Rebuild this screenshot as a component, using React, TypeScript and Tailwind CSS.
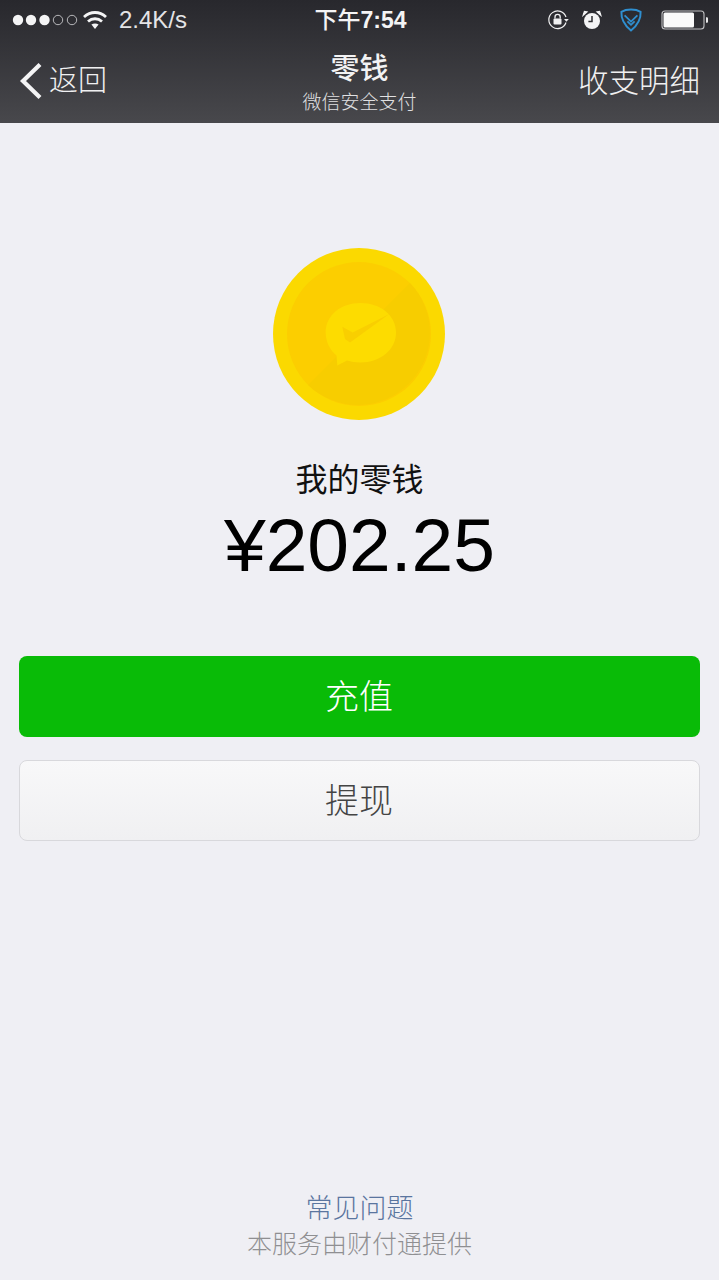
import React from "react";

const cjk = { fontFamily: '"Liberation Sans","Noto Sans CJK SC",sans-serif' };

function Signal() {
  return (
    <svg width="66" height="14" viewBox="0 0 66 14" className="block">
      {[6, 19, 32.5].map((x) => <circle key={x} cx={x} cy="7" r="5.2" fill="#f4f4f5" />)}
      {[46, 60].map((x) => <circle key={x} cx={x} cy="7" r="4.7" fill="none" stroke="#d8d8da" strokeWidth="0.8" />)}
    </svg>
  );
}

function Wifi() {
  return (
    <svg width="24" height="20" viewBox="0 0 24 20" className="block">
      <path d="M1 7C7.400 1 16.600 1 23 7" fill="none" stroke="#f4f4f5" strokeWidth="2.800" />
      <path d="M5 11.500C9.200 7.800 14.800 7.800 19 11.500" fill="none" stroke="#f4f4f5" strokeWidth="2.800" />
      <path d="M8.400 14.600C10.600 13 13.400 13 15.600 14.600L12 19Z" fill="#f4f4f5" />
    </svg>
  );
}

function RotationLock() {
  return (
    <svg width="22" height="22" viewBox="0 0 22 22" className="block">
      <path d="M19 13.500A8.800 8.800 0 1 1 19 8" fill="none" stroke="#f0f0f1" strokeWidth="1.200" />
      <path d="M17 10h4.800L19.400 12.800Z" fill="#f0f0f1" />
      <rect x="6.500" y="9.500" width="8" height="6" rx="1" fill="#f0f0f1" />
      <path d="M8 9.500V8a2.600 2.600 0 0 1 5.200 0v1.500" fill="none" stroke="#f0f0f1" strokeWidth="1.300" />
    </svg>
  );
}

function Alarm() {
  return (
    <svg width="20" height="20" viewBox="0 0 20 20" className="block">
      <circle cx="10" cy="11" r="8" fill="#f4f4f5" />
      <path d="M1.200 5.200 5 1.800 2.400 1.400Z M18.800 5.200 15 1.800 17.600 1.400Z" fill="#f4f4f5" stroke="#f4f4f5" strokeWidth="1.200" />
      <path d="M10 6v5.400H6.400" fill="none" stroke="#2d2d31" strokeWidth="1.500" />
    </svg>
  );
}

function Shield() {
  return (
    <svg width="22" height="24" viewBox="0 0 22 24" className="block">
      <path d="M11 1.500C14.500 1.500 18 2.200 20.600 3.800C21 9.500 18 17 11 22.500C4 17 1 9.500 1.400 3.800C4 2.200 7.500 1.500 11 1.500Z" fill="none" stroke="#2f8fd0" strokeWidth="2" />
      <path d="M4.600 7.400 11 13.600 17.400 7.400M7.400 13.400 11 16.800 14.600 13.400" fill="none" stroke="#2f8fd0" strokeWidth="1.800" />
    </svg>
  );
}

function Battery() {
  return (
    <svg width="48" height="20" viewBox="0 0 48 20" className="block">
      <rect x="1" y="1" width="42" height="18" rx="3" fill="none" stroke="#c0c0c2" strokeWidth="1.100" />
      <rect x="2.500" y="2.500" width="30.500" height="15" rx="1.500" fill="#fafafa" />
      <path d="M45 7.200h.8c.8 0 1.200.6 1.200 1.400v2.800c0 .8-.4 1.400-1.200 1.400H45Z" fill="#e8e8e9" />
    </svg>
  );
}

function Coin() {
  return (
    <svg width="172" height="172" viewBox="0 0 172 172" className="block">
      <circle cx="86" cy="86" r="86" fill="#fbd900" />
      <circle cx="86" cy="86" r="72" fill="#fcce00" />
      <path d="M136.900 35.100A72 72 0 0 1 35.100 136.900Z" fill="#f7cd00" />
      <path d="M87.500 55C107 55 123 67 123 84.500C123 102 107 114.500 87.500 114.500C82.500 114.500 78 113.800 74 112.500L64.300 117.500L63.500 107.500C57 102 52.700 94 52.700 84.500C52.700 67 68 55 87.500 55Z" fill="#fddc00" />
      <path d="M69.300 78.700L79.700 84.500L116.300 66L77 94.500L72 91Z" fill="#f9cf00" />
    </svg>
  );
}

export default function App() {
  return (
    <div className="w-[719px] h-[1280px] flex flex-col bg-[#efeff4] overflow-hidden" style={cjk}>
      <header className="h-[123px] shrink-0 bg-gradient-to-b from-[#28282d] to-[#48484c] text-white">
        <div className="h-[40px] pl-[12px] pr-[10px] grid grid-cols-[1fr_auto_1fr] items-center">
          <div className="flex items-center gap-[5px]">
            <Signal />
            <Wifi />
            <span className="ml-[7px] text-[24px] leading-[24px] text-[#e4e4e6]">2.4K/s</span>
          </div>
          <div className="text-center text-[23px] leading-[24px] font-medium text-[#f4f4f5]">下午<span className="font-semibold">7:54</span></div>
          <div className="flex items-center justify-end">
            <RotationLock />
            <div className="ml-[13px]"><Alarm /></div>
            <div className="ml-[18px]"><Shield /></div>
            <div className="ml-[19px]"><Battery /></div>
          </div>
        </div>
        <div className="h-[83px] grid grid-cols-[1fr_auto_1fr] items-start pl-[19px] pr-[19px]">
          <div className="flex items-center h-[81px]">
            <svg width="24" height="38" viewBox="0 0 24 38" className="block">
              <path d="M21 2.500L4 19L21 35.500" fill="none" stroke="#f4f4f5" strokeWidth="4.200" />
            </svg>
            <span className="ml-[6px] text-[29px] leading-[36px] font-light text-[#f0f0f1]">返回</span>
          </div>
          <div className="flex flex-col items-center pt-[10px]">
            <span className="text-[29px] leading-[38px] font-medium text-[#f2f2f3]">零钱</span>
            <span className="mt-[3px] text-[19px] leading-[24px] font-light text-[#e0e0e2]">微信安全支付</span>
          </div>
          <div className="h-[81px] flex items-center justify-end text-[30.500px] leading-[36px] font-light text-[#f0f0f1]">收支明细</div>
        </div>
      </header>

      <main className="flex-1 flex flex-col items-center">
        <div className="mt-[125px] -ml-[1px]"><Coin /></div>
        <div className="mt-[39px] text-[32px] leading-[42px] text-[#111111]">我的零钱</div>
        <div className="mt-[3px] text-[75px] leading-[83px] text-black">¥202.25</div>
        <div className="w-full px-[19px] mt-[69px] flex flex-col gap-[23px]">
          <button className="h-[81px] pt-[2px] pr-[1px] rounded-[8px] bg-[#09bb07] text-white text-[34px] font-light">充值</button>
          <button className="h-[81px] pt-[2px] pr-[1px] rounded-[8px] border-[1.500px] border-[#d8d8dc] bg-gradient-to-b from-[#f8f8f9] to-[#f0f0f2] text-[#444444] text-[34px] font-light">提现</button>
        </div>
        <div className="mt-auto pb-[18px] flex flex-col items-center">
          <span className="text-[27px] leading-[34px] font-light text-[#5a759f]">常见问题</span>
          <span className="text-[25px] leading-[36px] font-light text-[#8f8f92]">本服务由财付通提供</span>
        </div>
      </main>
    </div>
  );
}
